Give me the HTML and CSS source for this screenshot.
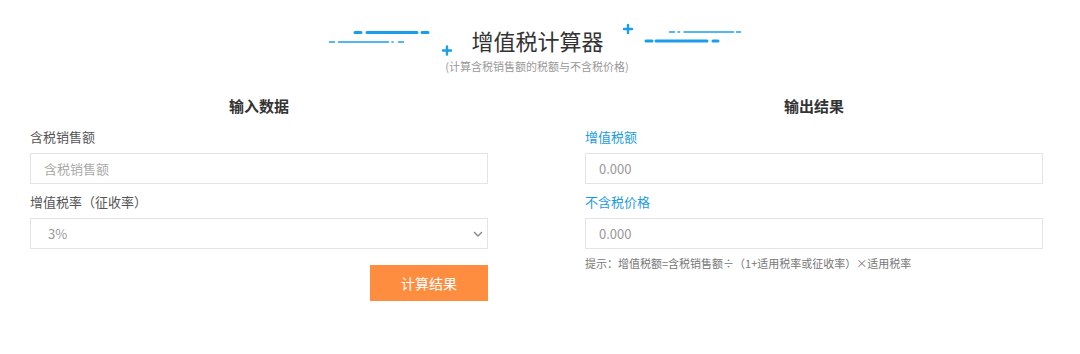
FILE: index.html
```html
<!DOCTYPE html>
<html lang="zh-CN">
<head>
  <meta charset="UTF-8" />
  <meta name="viewport" content="width=device-width, initial-scale=1.0" />
  <title>增值税计算器</title>
  <link rel="stylesheet" href="styles.css">
</head>
<body>
  <div class="page">
    <header class="title-row">
      <!-- left decoration -->
      <svg class="deco deco-left" width="130" height="40" viewBox="0 0 130 40">
        <g stroke="#1a9eea" stroke-linecap="round" fill="none">
          <path d="M30 12.5H36M42 12.5H92M97 12.5H103" stroke-width="3"/>
          <path d="M4.5 22H9.5M13.5 22H63.5M67 22H68M73.5 22H78.5" stroke-width="1.5"/>
          <path d="M118 30.5H126M122 26.5V34.5" stroke-width="2.4"/>
        </g>
      </svg>
      <h1 class="title">增值税计算器</h1>
      <!-- right decoration -->
      <svg class="deco deco-right" width="140" height="40" viewBox="0 0 140 40">
        <g stroke="#1a9eea" stroke-linecap="round" fill="none">
          <path d="M14 14H22M18 10V18" stroke-width="2.4"/>
          <path d="M59.5 17H64.5M68 17H69.5M74 17H123.5M126.5 17H130.5" stroke-width="1.5"/>
          <path d="M36 26H42M46 26H97M103 26H108" stroke-width="3"/>
        </g>
      </svg>
    </header>
    <p class="subtitle">(计算含税销售额的税额与不含税价格)</p>

    <main class="columns">
      <section class="panel">
        <h2>输入数据</h2>
        <label class="field-label" for="amount">含税销售额</label>
        <input id="amount" class="field" type="text" placeholder="含税销售额" />

        <label class="field-label" for="rate">增值税率（征收率）</label>
        <div class="select-wrap">
          <select id="rate" class="field">
            <option>3%</option>
            <option>5%</option>
            <option>6%</option>
            <option>9%</option>
            <option>13%</option>
          </select>
          <svg class="chevron" width="10" height="6" viewBox="0 0 10 6">
            <path d="M1 1L5 5L9 1" stroke="#888" stroke-width="1.4" fill="none"/>
          </svg>
        </div>

        <button class="calc-btn" type="button" onclick="calc()">计算结果</button>
      </section>

      <section class="panel">
        <h2>输出结果</h2>
        <label class="field-label blue" for="tax">增值税额</label>
        <input id="tax" class="field result" type="text" value="0.000" readonly />

        <label class="field-label blue" for="net">不含税价格</label>
        <input id="net" class="field result" type="text" value="0.000" readonly />

        <p class="hint">提示：增值税额=含税销售额÷（1+适用税率或征收率）×适用税率</p>
      </section>
    </main>
  </div>

  <script>
    function calc() {
      var amount = parseFloat(document.getElementById('amount').value) || 0;
      var rate = parseFloat(document.getElementById('rate').value) / 100;
      var tax = amount / (1 + rate) * rate;
      document.getElementById('tax').value = tax.toFixed(3);
      document.getElementById('net').value = (amount - tax).toFixed(3);
    }
  </script>
</body>
</html>
```

FILE: styles.css
```css
body {
  font-family: "Noto Sans CJK SC", "Noto Sans", sans-serif;
  margin: 0;
  padding: 0;
  background-color: #fff;
  color: #333;
}
.page {
  width: 1074px;
  padding-top: 20px;
}
.title-row {
  display: flex;
  justify-content: center;
  align-items: center;
  height: 40px;
}
.deco {
  display: block;
  flex: none;
}
.deco-right {
  margin-bottom: 10px;
  margin-left: 8px;
}
.title {
  margin: 0 0 0 17px;
  font-size: 22px;
  font-weight: normal;
  line-height: 40px;
  color: #333;
  width: 130px;
  white-space: nowrap;
}
.subtitle {
  margin: -1px 0 0;
  text-align: center;
  font-size: 11px;
  line-height: 14px;
  color: #999;
}
.columns {
  display: grid;
  grid-template-columns: 458px 458px;
  column-gap: 97px;
  padding: 0 31px 0 30px;
  margin-top: 23px;
}
.panel {
  display: flex;
  flex-direction: column;
}
.panel h2 {
  margin: 0 0 4px;
  text-align: center;
  font-size: 15px;
  line-height: 20px;
  font-weight: bold;
  color: #333;
}
.field-label {
  font-size: 13px;
  line-height: 20px;
  padding: 7px 0 6px;
  color: #555;
}
.field-label.blue {
  color: #1c9be6;
}
.field {
  box-sizing: border-box;
  width: 100%;
  height: 31px;
  margin: 0 0 1px;
  border: 1px solid #e4e4e4;
  border-radius: 0;
  padding: 0 13px;
  font-family: inherit;
  font-size: 13px;
  color: #999;
  background: #fff;
  outline: none;
}
.field::placeholder {
  color: #aaa;
}
.result {
  color: #999;
}
.select-wrap {
  position: relative;
}
select.field {
  appearance: none;
  -webkit-appearance: none;
  padding-left: 17px;
  color: #999;
}
.chevron {
  position: absolute;
  right: 5px;
  top: 13px;
  pointer-events: none;
}
.calc-btn {
  align-self: flex-end;
  margin-top: 15px;
  width: 118px;
  height: 36px;
  border: none;
  background-color: #ff8d40;
  color: #fff;
  font-family: inherit;
  font-size: 14px;
  cursor: pointer;
}
.hint {
  margin: 5px 0 0;
  font-size: 11px;
  line-height: 16px;
  color: #777;
}
```
